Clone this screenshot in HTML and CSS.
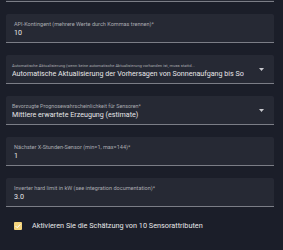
FILE: index.html
```html
<!DOCTYPE html>
<html lang="de">
<head>
<meta charset="utf-8">
<link rel="stylesheet" href="styles.css">
</head>
<body>
<div class="form">
  <div class="field text"></div>
  <div class="field text">
    <div class="label">API-Kontingent (mehrere Werte durch Kommas trennen)*</div>
    <div class="value">10</div>
  </div>
  <div class="field select">
    <div class="sel-body">
      <div class="label small">Automatische Aktualisierung (wenn keine automatische Aktualisierung vorhanden ist, muss stattd...</div>
      <div class="value">Automatische Aktualisierung der Vorhersagen von Sonnenaufgang bis Sonnenuntergang</div>
    </div>
    <svg class="arrow" width="5" height="3" viewBox="0 0 5 3"><path d="M0 0h5L2.5 3z" fill="#c9cacf"/></svg>
  </div>
  <div class="field select">
    <div class="sel-body">
      <div class="label mid">Bevorzugte Prognosewahrscheinlichkeit für Sensoren*</div>
      <div class="value">Mittlere erwartete Erzeugung (estimate)</div>
    </div>
    <svg class="arrow" width="5" height="3" viewBox="0 0 5 3"><path d="M0 0h5L2.5 3z" fill="#c9cacf"/></svg>
  </div>
  <div class="field text">
    <div class="label">Nächster X-Stunden-Sensor (min=1, max=144)*</div>
    <div class="value">1</div>
  </div>
  <div class="field text">
    <div class="label">Inverter hard limit in kW (see integration documentation)*</div>
    <div class="value">3.0</div>
  </div>
  <label class="check-row">
    <span class="box">
      <svg width="8" height="8" viewBox="0 0 8 8"><path d="M1.6 4.1l1.6 1.6 3.2-3.4" fill="none" stroke="#fff" stroke-width="1"/></svg>
    </span>
    <span class="check-text">Aktivieren Sie die Schätzung von 10 Sensorattributen</span>
  </label>
</div>
</body>
</html>
```
FILE: styles.css
```css
html, body {
  margin: 0;
  padding: 0;
  background: #1b1e29;
  width: 283px;
  height: 250px;
  overflow: hidden;
}
body {
  font-family: Roboto, "Noto Sans", sans-serif;
  color: #e3e3e6;
}
.form {
  display: flex;
  flex-direction: column;
  gap: 12px;
  margin-top: -27px;
  padding: 0 9px 0 6px;
}
.field {
  box-sizing: border-box;
  height: 29px;
  background: #262934;
  border-bottom: 1px solid #7b7d86;
  border-radius: 2px 2px 0 0;
  overflow: hidden;
}
.field.text {
  padding: 7px 8px 0;
}
.field.select {
  padding: 7px 10px 0 6px;
  display: flex;
  align-items: flex-start;
  gap: 15px;
}
.sel-body {
  flex: 1;
  min-width: 0;
}
.label {
  font-size: 5.55px;
  line-height: 7px;
  color: #a9aab0;
  white-space: nowrap;
}
.label.mid {
  font-size: 5.35px;
}
.label.small {
  font-size: 4.15px;
}
.value {
  font-size: 7.15px;
  line-height: 10px;
  color: #e6e6e8;
  white-space: nowrap;
  overflow: hidden;
}
.arrow {
  margin-top: 6px;
  flex: none;
}
.check-row {
  display: flex;
  align-items: center;
  gap: 10px;
  margin-top: 2px;
  padding-left: 8px;
}
.box {
  width: 8px;
  height: 8px;
  background: #f4d47c;
  border-radius: 1px;
  display: flex;
}
.check-text {
  font-size: 7.3px;
  color: #e6e6e8;
}
```
